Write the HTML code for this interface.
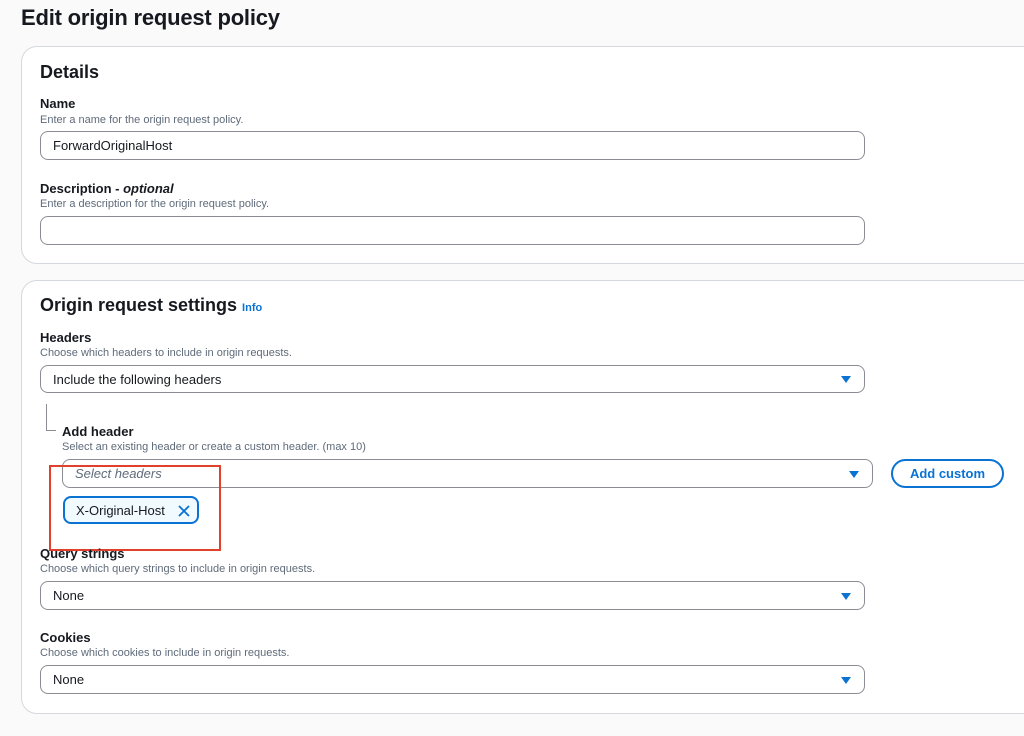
<!DOCTYPE html>
<html><head><meta charset="utf-8"><style>
*{box-sizing:border-box;margin:0;padding:0}
body{width:1024px;height:736px;background:#fafafa;font-family:"Liberation Sans",sans-serif;color:#16191f;position:relative;overflow:hidden}
.a{position:absolute;white-space:nowrap}
.panel{position:absolute;left:21px;width:1040px;background:#fff;border:1px solid #d5d8dc;border-radius:16px}
h1{position:absolute;left:21px;top:5px;font-size:22px;font-weight:bold;letter-spacing:-0.2px}
.h2{font-size:18px;font-weight:bold}
.lb{font-size:13px;font-weight:bold}
.ds{font-size:11px;color:#5f6b7a}
.in{position:absolute;background:#fff;border:1px solid #8c8c94;border-radius:8px;font-size:13px;padding-left:12px;display:flex;align-items:center}
.car{position:absolute;right:13px;top:50%;margin-top:-3px;width:0;height:0;border-left:5px solid transparent;border-right:5px solid transparent;border-top:7px solid #0972d3}
</style></head><body>
<h1>Edit origin request policy</h1>
<div class="panel" style="top:46px;height:218px"></div>
<div class="panel" style="top:280px;height:434px"></div>

<div class="a h2" style="left:40px;top:62px">Details</div>
<div class="a lb" style="left:40px;top:96px">Name</div>
<div class="a ds" style="left:40px;top:114px">Enter a name for the origin request policy.</div>
<div class="in" style="left:40px;top:131px;width:825px;height:29px">ForwardOriginalHost</div>
<div class="a lb" style="left:40px;top:181px">Description - <i>optional</i></div>
<div class="a ds" style="left:40px;top:198px">Enter a description for the origin request policy.</div>
<div class="in" style="left:40px;top:216px;width:825px;height:29px"></div>

<div class="a h2" style="left:40px;top:295px">Origin request settings <span style="font-size:11px;color:#0972d3">Info</span></div>
<div class="a lb" style="left:40px;top:330px">Headers</div>
<div class="a ds" style="left:40px;top:347px">Choose which headers to include in origin requests.</div>
<div class="in" style="left:40px;top:365px;width:825px;height:28px">Include the following headers<div class="car"></div></div>
<div class="a" style="left:46px;top:404px;width:10px;height:27px;border-left:1px solid #8c8c94;border-bottom:1px solid #8c8c94"></div>
<div class="a lb" style="left:62px;top:424px">Add header</div>
<div class="a ds" style="left:62px;top:441px">Select an existing header or create a custom header. (max 10)</div>
<div class="in" style="left:62px;top:459px;width:811px;height:29px;color:#5f6b7a;font-style:italic">Select headers<div class="car"></div></div>
<div class="a" style="left:891px;top:459px;width:113px;height:29px;border:2px solid #0972d3;border-radius:15px;color:#0972d3;font-size:13px;font-weight:bold;display:flex;align-items:center;justify-content:center">Add custom</div>
<div class="a" style="left:63px;top:496px;width:136px;height:28px;border:2px solid #0972d3;border-radius:8px;background:#f1faff;font-size:13px;padding-left:11px;display:flex;align-items:center">X-Original-Host
<svg style="position:absolute;left:113px;top:7px" width="12" height="12" viewBox="0 0 12 12"><path d="M1 1L11 11M11 1L1 11" stroke="#0972d3" stroke-width="1.8"/></svg></div>
<div class="a" style="left:49px;top:465px;width:172px;height:86px;border:2px solid #e0402c"></div>

<div class="a lb" style="left:40px;top:546px">Query strings</div>
<div class="a ds" style="left:40px;top:563px">Choose which query strings to include in origin requests.</div>
<div class="in" style="left:40px;top:581px;width:825px;height:29px">None<div class="car"></div></div>
<div class="a lb" style="left:40px;top:630px">Cookies</div>
<div class="a ds" style="left:40px;top:647px">Choose which cookies to include in origin requests.</div>
<div class="in" style="left:40px;top:665px;width:825px;height:29px">None<div class="car"></div></div>
</body></html>
